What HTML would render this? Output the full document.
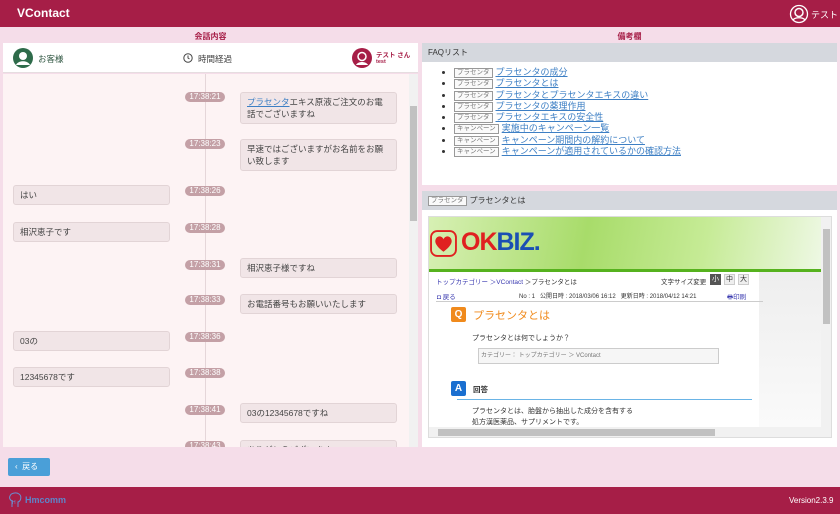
<!DOCTYPE html>
<html><head><meta charset="utf-8"><style>
*{margin:0;padding:0;box-sizing:border-box}
body{width:840px;height:514px;overflow:hidden;background:#f5dde9;font-family:"Liberation Sans","Noto Sans CJK JP",sans-serif;position:relative;font-size:8px;color:#333}
.a{position:absolute}
.hdr{left:0;top:0;width:840px;height:27px;background:#a61e47}
.ftr{left:0;top:487px;width:840px;height:27px;background:#a61e47}
.ttl{font-size:8px;color:#a61e47;font-weight:bold;text-align:center}
.ts{width:40px;height:10px;border-radius:5px;background:#c4a0a6;color:#fff;font-size:8px;line-height:10px;text-align:center;left:185px}
.bl{background:#f1e5e7;border:1px solid #e2d4d6;border-radius:3px;font-size:8.5px;line-height:12px;padding:3px 6px;color:#444}
.L{left:13px;width:157px}
.R{left:240px;width:157px}
.tag{display:inline-block;border:1px solid #999;color:#777;font-size:6.5px;line-height:8px;padding:0 2px;margin-right:3px;background:#fafafa;vertical-align:1px}
.faq li{font-size:9px;line-height:11.3px;margin-left:32px}
.faq a{color:#3d7fc4;text-decoration:underline}
</style></head><body>
<div class="a hdr"></div>
<div class="a" style="left:17px;top:6px;color:#fff;font-weight:bold;font-size:12px">VContact</div>
<svg class="a" style="left:789px;top:4px" width="20" height="20" viewBox="0 0 20 20"><circle cx="10" cy="10" r="8.5" fill="none" stroke="#fff" stroke-width="1.3"/><circle cx="10" cy="8.5" r="4" fill="none" stroke="#fff" stroke-width="1.5"/><path d="M4 16c2-3 10-3 12 0" stroke="#fff" fill="none" stroke-width="1.3"/></svg>
<div class="a" style="left:811px;top:8px;color:#fff;font-size:9px">テスト</div>

<div class="a ttl" style="left:3px;top:31px;width:415px">会話内容</div>
<div class="a ttl" style="left:422px;top:31px;width:415px">備考欄</div>

<div class="a" style="left:3px;top:43px;width:415px;height:30px;background:#fff;border-bottom:1px solid #e6dde0"></div>
<svg class="a" style="left:13px;top:48px" width="20" height="20" viewBox="0 0 20 20"><circle cx="10" cy="10" r="10" fill="#2e6b4a"/><circle cx="10" cy="8" r="4" fill="#fff"/><path d="M3 17c2-5 12-5 14 0" fill="#fff"/></svg>
<div class="a" style="left:38px;top:53px;font-size:8.5px;color:#2e5540">お客様</div>
<svg class="a" style="left:183px;top:53px" width="10" height="10" viewBox="0 0 10 10"><circle cx="5" cy="5" r="4.2" fill="none" stroke="#444" stroke-width="1"/><path d="M5 2.5V5l1.5 1" stroke="#444" fill="none"/></svg>
<div class="a" style="left:198px;top:53px;font-size:8.5px;color:#444">時間経過</div>
<svg class="a" style="left:352px;top:48px" width="20" height="20" viewBox="0 0 20 20"><circle cx="10" cy="10" r="10" fill="#a61e47"/><circle cx="10" cy="8.5" r="4" fill="none" stroke="#fff" stroke-width="1.5"/><path d="M4 17c2-4 10-4 12 0" fill="#fff"/></svg>
<div class="a" style="left:376px;top:49px;font-size:6.5px;color:#a61e47;font-weight:bold">テスト さん</div>
<div class="a" style="left:376px;top:59px;font-size:5.5px;color:#a61e47;font-weight:bold">test</div>

<div class="a" style="left:3px;top:74px;width:415px;height:373px;background:#fdf3f4;overflow:hidden">
<div class="a" style="left:202px;top:0;width:1px;height:373px;background:#e5d6d9"></div>
<div class="a" style="left:406px;top:0;width:9px;height:373px;background:#f1f1f1"></div>
<div class="a" style="left:407px;top:32px;width:7px;height:115px;background:#c1c1c1"></div>
</div>
<div class="a ts" style="top:92px">17:38:21</div>
<div class="a bl R" style="top:92px"><span style="color:#3d7fc4;text-decoration:underline">プラセンタ</span>エキス原液ご注文のお電話でございますね</div>
<div class="a ts" style="top:139px">17:38:23</div>
<div class="a bl R" style="top:139px">早速ではございますがお名前をお願い致します</div>
<div class="a ts" style="top:186px">17:38:26</div>
<div class="a bl L" style="top:185px">はい</div>
<div class="a ts" style="top:223px">17:38:28</div>
<div class="a bl L" style="top:222px">相沢恵子です</div>
<div class="a ts" style="top:260px">17:38:31</div>
<div class="a bl R" style="top:258px">相沢恵子様ですね</div>
<div class="a ts" style="top:295px">17:38:33</div>
<div class="a bl R" style="top:294px">お電話番号もお願いいたします</div>
<div class="a ts" style="top:332px">17:38:36</div>
<div class="a bl L" style="top:331px">03の</div>
<div class="a ts" style="top:368px">17:38:38</div>
<div class="a bl L" style="top:367px">12345678です</div>
<div class="a ts" style="top:405px">17:38:41</div>
<div class="a bl R" style="top:403px">03の12345678ですね</div>
<div class="a" style="left:0;top:440px;width:408px;height:7px;overflow:hidden"><div class="a ts" style="top:1px">17:38:43</div><div class="a bl R" style="top:0">ありがとうございます</div></div>

<div class="a" style="left:8px;top:458px;width:42px;height:18px;background:#4a9fd8;border-radius:2px;color:#fff;font-size:8px;line-height:18px;padding-left:7px">&#8249;&nbsp;&nbsp;戻る</div>

<div class="a" style="left:422px;top:43px;width:415px;height:19px;background:#d5d8de;font-size:8px;line-height:19px;padding-left:6px">FAQリスト</div>
<div class="a" style="left:422px;top:62px;width:415px;height:123px;background:#fff"></div>
<ul class="a faq" style="left:422px;top:67px">
<li><span class="tag">プラセンタ</span><a>プラセンタの成分</a></li>
<li><span class="tag">プラセンタ</span><a>プラセンタとは</a></li>
<li><span class="tag">プラセンタ</span><a>プラセンタとプラセンタエキスの違い</a></li>
<li><span class="tag">プラセンタ</span><a>プラセンタの薬理作用</a></li>
<li><span class="tag">プラセンタ</span><a>プラセンタエキスの安全性</a></li>
<li><span class="tag">キャンペーン</span><a>実施中のキャンペーン一覧</a></li>
<li><span class="tag">キャンペーン</span><a>キャンペーン期間内の解約について</a></li>
<li><span class="tag">キャンペーン</span><a>キャンペーンが適用されているかの確認方法</a></li>
</ul>
<div class="a" style="left:422px;top:191px;width:415px;height:19px;background:#d5d8de;font-size:8px;line-height:19px;padding-left:6px"><span class="tag">プラセンタ</span>プラセンタとは</div>
<div class="a" style="left:422px;top:210px;width:415px;height:237px;background:#fff"></div>
<div class="a" style="left:428px;top:216px;width:404px;height:222px;background:#fff;border:1px solid #ddd;overflow:hidden">
 <div class="a" style="left:0;top:0;width:392px;height:55px;background:linear-gradient(100deg,#d7f0b4 0%,#a8dc6a 40%,#c6eb96 70%,#eef8e4 100%);border-bottom:3px solid #56b21e"></div>
 <div class="a" style="left:330px;top:55px;width:62px;height:155px;background:linear-gradient(#eee,#fafafa)"></div>
 <svg class="a" style="left:1px;top:13px" width="27" height="27" viewBox="0 0 26 26"><rect x="1" y="1" width="24" height="24" rx="6" fill="none" stroke="#e02020" stroke-width="1.8"/><path d="M13 21C5 15 4 11 6 8c2-3 6-2 7 1 1-3 5-4 7-1 2 3 1 7-7 13z" fill="#e02020"/></svg>
 <div class="a" style="left:32px;top:11px;font-size:25px;font-weight:bold;letter-spacing:-1px"><span style="color:#e02020">OK</span><span style="color:#1a4fb4">BIZ.</span></div>
 <div class="a" style="left:392px;top:0;width:11px;height:210px;background:#f1f1f1"></div>
 <div class="a" style="left:394px;top:12px;width:7px;height:95px;background:#c1c1c1"></div>
 <div class="a" style="left:0;top:210px;width:403px;height:11px;background:#f1f1f1"></div>
 <div class="a" style="left:9px;top:212px;width:277px;height:7px;background:#c1c1c1"></div>
 <div class="a" style="left:7px;top:59px;font-size:6.5px;color:#3a3ab0">トップカテゴリー ＞VContact <span style="color:#333">＞プラセンタとは</span></div>
 <div class="a" style="left:232px;top:59px;font-size:6.5px;color:#333">文字サイズ変更</div>
 <div class="a" style="left:281px;top:57px;width:11px;height:11px;background:#555;color:#fff;font-size:7px;text-align:center;line-height:11px">小</div>
 <div class="a" style="left:295px;top:57px;width:11px;height:11px;background:#eee;border:1px solid #ccc;font-size:7px;text-align:center;line-height:10px">中</div>
 <div class="a" style="left:309px;top:57px;width:11px;height:11px;background:#eee;border:1px solid #ccc;font-size:7px;text-align:center;line-height:10px">大</div>
 <div class="a" style="left:8px;top:74px;font-size:6.5px;color:#3a3ab0">◘ 戻る</div>
 <div class="a" style="left:90px;top:74px;font-size:6px;color:#333;white-space:nowrap">No : 1&nbsp;&nbsp;&nbsp;公開日時 : 2018/03/06 16:12&nbsp;&nbsp;&nbsp;更新日時 : 2018/04/12 14:21</div>
 <div class="a" style="left:298px;top:74px;font-size:6.5px;color:#3a3ab0">🖶印刷</div>
 <div class="a" style="left:7px;top:84px;width:327px;height:1px;background:#ccc"></div>
 <div class="a" style="left:22px;top:90px;width:15px;height:15px;background:#f08a1c;border-radius:2px;color:#fff;font-weight:bold;font-size:10px;text-align:center;line-height:15px">Q</div>
 <div class="a" style="left:44px;top:90px;font-size:11px;color:#f08a1c">プラセンタとは</div>
 <div class="a" style="left:43px;top:116px;font-size:7px">プラセンタとは何でしょうか？</div>
 <div class="a" style="left:49px;top:131px;width:241px;height:16px;border:1px solid #ccc;background:#f6f6f6;font-size:6px;color:#777;line-height:14px;padding-left:2px">カテゴリー： トップカテゴリー ＞ VContact</div>
 <div class="a" style="left:22px;top:164px;width:15px;height:15px;background:#1a6fd0;border-radius:2px;color:#fff;font-weight:bold;font-size:10px;text-align:center;line-height:15px">A</div>
 <div class="a" style="left:44px;top:167px;font-size:7.5px;font-weight:bold">回答</div>
 <div class="a" style="left:28px;top:182px;width:295px;height:1px;background:#6ab4e6"></div>
 <div class="a" style="left:43px;top:189px;font-size:7px;line-height:11px">プラセンタとは、胎盤から抽出した成分を含有する<br>処方漢医薬品、サプリメントです。</div>
</div>

<div class="a ftr"></div>
<svg class="a" style="left:8px;top:492px" width="14" height="16" viewBox="0 0 14 16"><path d="M4 15V9C2 8 1 6 2 4 3 1 8 0 11 2c3 2 2 7-1 8v5" fill="none" stroke="#6a8fd0" stroke-width="1"/><text x="4" y="12" font-size="5" fill="#6a8fd0">H</text></svg>
<div class="a" style="left:25px;top:495px;font-size:9px;font-weight:bold;color:#5d85c9">Hmcomm</div>
<div class="a" style="left:789px;top:496px;font-size:8px;color:#fff">Version2.3.9</div>
</body></html>
